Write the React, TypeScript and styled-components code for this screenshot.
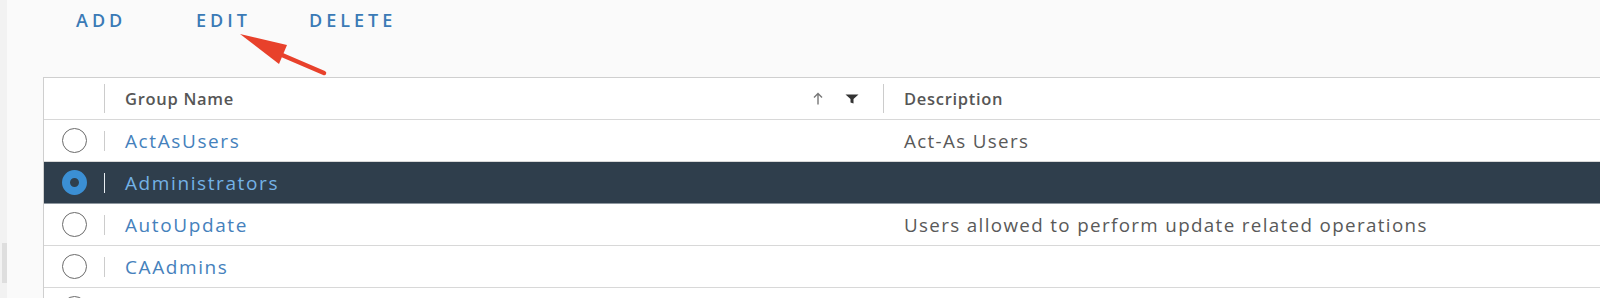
import * as React from "react"
import styled, { createGlobalStyle } from "styled-components"

const GlobalStyle = createGlobalStyle`
    html, body {
        margin: 0;
        padding: 0;
        background: #fafafa;
        font-family: "Open Sans", "Liberation Sans", sans-serif;
    }
`

const Page = styled.div`
    display: flex;
    height: 298px;
    overflow: hidden;
    background: #fafafa;
`

const LeftRail = styled.div`
    width: 7px;
    flex: none;
    background: #f2f2f2;
    display: flex;
    flex-direction: column;
    align-items: flex-end;
`

const RailThumb = styled.div`
    width: 5px;
    height: 40px;
    margin-top: 243px;
    background: #dedede;
`

const Main = styled.div`
    position: relative;
    flex: 1;
    min-width: 0;
    padding-left: 36px;
`

const Toolbar = styled.div`
    display: grid;
    grid-template-columns: 120px 113px auto;
    align-items: center;
    height: 39px;
    padding-left: 33px;
`

const ActionButton = styled.button`
    background: none;
    border: 0;
    padding: 0;
    text-align: left;
    font-family: inherit;
    font-size: 18px;
    font-weight: 600;
    letter-spacing: 4px;
    color: #3b7ab6;
    cursor: pointer;
`

const Table = styled.div`
    margin-top: 38px;
    background: #fff;
    border-top: 1px solid #cfcfcf;
    border-left: 1px solid #cfcfcf;
    width: calc(100% + 20px);
`

const Row = styled.div<{ $selected?: boolean; $header?: boolean }>`
    display: grid;
    grid-template-columns: 60px 779px 1fr;
    height: 41px;
    border-bottom: 1px solid ${p => (p.$selected ? "#8e979f" : "#d8d8d8")};
    background: ${p => (p.$selected ? "#2f3e4c" : "#fff")};
`

const SelectCell = styled.div`
    display: flex;
    align-items: center;
    justify-content: center;
`

const Cell = styled.div`
    display: flex;
    align-items: center;
    min-width: 0;
    white-space: nowrap;
`

const Divider = styled.div<{ $tall?: boolean; $light?: boolean }>`
    width: 1px;
    flex: none;
    height: ${p => (p.$tall ? "29px" : "20px")};
    background: ${p => (p.$light ? "#e8edf2" : "#cccccc")};
`

const HeaderText = styled.span`
    padding-left: 20px;
    font-size: 16.5px;
    font-weight: 600;
    letter-spacing: 0.7px;
    color: #565656;
`

const NameText = styled.span<{ $selected?: boolean }>`
    padding-left: 20px;
    font-size: 19px;
    letter-spacing: 1.6px;
    color: ${p => (p.$selected ? "#74b2e6" : "#4581bc")};
`

const DescText = styled.span`
    padding-left: 21px;
    font-size: 18.8px;
    letter-spacing: 1.35px;
    color: #595959;
`

const HeaderTools = styled.div`
    margin-left: auto;
    margin-right: 24px;
    display: flex;
    align-items: center;
    gap: 22px;
    color: #333;
`

const Radio = styled.span<{ $checked?: boolean }>`
    box-sizing: border-box;
    width: 25px;
    height: 25px;
    border-radius: 50%;
    border: ${p => (p.$checked ? "8.5px solid #3b8fd4" : "1.5px solid #6b6b6b")};
    background: ${p => (p.$checked ? "#2f3e4c" : "#fff")};
`

const Callout = styled.svg`
    position: absolute;
    left: 188px;
    top: 25px;
    pointer-events: none;
`

const groups: Array<{ name: string; description: string }> = [
    { name: "ActAsUsers", description: "Act-As Users" },
    { name: "Administrators", description: "" },
    { name: "AutoUpdate", description: "Users allowed to perform update related operations" },
    { name: "CAAdmins", description: "" },
    { name: "", description: "" },
]

const selectedName = "Administrators"

export default function App() {
    return (
        <Page>
            <GlobalStyle />
            <LeftRail>
                <RailThumb />
            </LeftRail>
            <Main>
                <Toolbar>
                    <ActionButton>ADD</ActionButton>
                    <ActionButton>EDIT</ActionButton>
                    <ActionButton>DELETE</ActionButton>
                </Toolbar>
                <Table>
                    <Row $header>
                        <SelectCell />
                        <Cell>
                            <Divider $tall />
                            <HeaderText>Group Name</HeaderText>
                            <HeaderTools>
                                <svg width="10" height="13" viewBox="0 0 10 13">
                                    <path d="M5 12.5V1.5M1 5.5L5 1.5L9 5.5" fill="none" stroke="#777" strokeWidth="1.4" />
                                </svg>
                                <svg width="14" height="10" viewBox="0 0 14 10">
                                    <path d="M0.5 0.5H13.5L8.5 5V9.5L5.5 8.5V5Z" fill="#333" />
                                </svg>
                            </HeaderTools>
                        </Cell>
                        <Cell>
                            <Divider $tall />
                            <HeaderText>Description</HeaderText>
                        </Cell>
                    </Row>
                    {groups.map((g, i) => {
                        const selected = g.name === selectedName
                        return (
                            <Row key={i} $selected={selected}>
                                <SelectCell>
                                    <Radio $checked={selected} />
                                </SelectCell>
                                <Cell>
                                    <Divider $light={selected} />
                                    <NameText $selected={selected}>{g.name}</NameText>
                                </Cell>
                                <Cell>
                                    <DescText>{g.description}</DescText>
                                </Cell>
                            </Row>
                        )
                    })}
                </Table>
                <Callout width="140" height="60" viewBox="195 25 140 60">
                    <line x1="324" y1="73" x2="268" y2="49" stroke="#e8412b" strokeWidth="4.5" strokeLinecap="round" />
                    <polygon points="240,34 287,45 279,64" fill="#e8412b" />
                </Callout>
            </Main>
        </Page>
    )
}
